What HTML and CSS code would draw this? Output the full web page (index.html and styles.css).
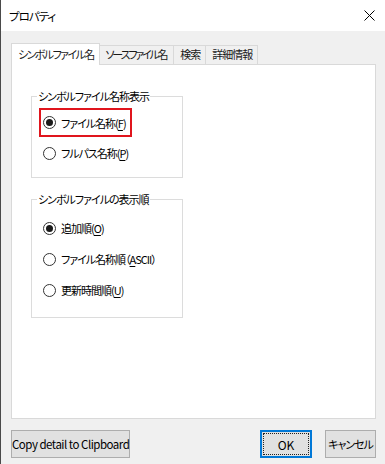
FILE: index.html
```html
<!DOCTYPE html>
<html lang="ja">
<head>
<meta charset="utf-8">
<title>プロパティ</title>
<link rel="stylesheet" href="styles.css">
</head>
<body>
<div class="window">
  <div class="titlebar">
    <span class="title">プロパティ</span>
    <svg class="close" width="11" height="11" viewBox="0 0 11 11"><path d="M0.5 0.5 L10.5 10.5 M10.5 0.5 L0.5 10.5" stroke="#000" stroke-width="1" fill="none"/></svg>
  </div>
  <div class="main">
    <div class="tabs">
      <div class="tab active">シンボルファイル名</div>
      <div class="tab kana">ソースファイル名</div>
      <div class="tab">検索</div>
      <div class="tab">詳細情報</div>
    </div>
    <div class="panel">
      <fieldset class="group g1">
        <legend>シンボルファイル名称表示</legend>
        <div class="row highlight"><span class="radio checked"></span><span class="label">ファイル名称(<u>F</u>)</span></div>
        <div class="row second"><span class="radio"></span><span class="label">フルパス名称(<u>P</u>)</span></div>
      </fieldset>
      <fieldset class="group g2">
        <legend>シンボルファイルの表示順</legend>
        <div class="row"><span class="radio checked"></span><span class="label">追加順(<u>O</u>)</span></div>
        <div class="row"><span class="radio"></span><span class="label">ファイル名称順（<u>A</u>SCII）</span></div>
        <div class="row"><span class="radio"></span><span class="label">更新時間順(<u>U</u>)</span></div>
      </fieldset>
    </div>
    <div class="buttons">
      <button class="btn copy">Copy detail to Clipboard</button>
      <button class="btn ok">OK</button>
      <button class="btn cancel">キャンセル</button>
    </div>
  </div>
</div>
</body>
</html>
```

FILE: styles.css
```css
html, body {
  margin: 0;
  padding: 0;
}
body {
  width: 385px;
  height: 464px;
  overflow: hidden;
  background: #f0f0f0;
  font-family: "Noto Sans CJK JP", sans-serif;
  font-size: 11px;
  letter-spacing: -1px;
  color: #000;
  font-feature-settings: "palt";
}
.window {
  height: 464px;
  box-sizing: border-box;
  border-left: 1px solid #4a4a4a;
  display: flex;
  flex-direction: column;
}
.titlebar {
  height: 31px;
  flex: none;
  background: #fff;
  display: flex;
  align-items: center;
  justify-content: space-between;
  padding: 0 10px 0 8px;
}
.title {
  font-size: 11.5px;
  line-height: 16px;
}
.close {
  display: block;
}
.main {
  flex: 1;
  display: flex;
  flex-direction: column;
  padding: 12px 9px 6px 10px;
  min-height: 0;
}
.tabs {
  display: flex;
  align-items: flex-end;
  height: 21px;
  flex: none;
  position: relative;
  z-index: 1;
}
.tab {
  box-sizing: border-box;
  height: 19px;
  line-height: 17px;
  padding: 0 5px 0 6px;
  border: 1px solid #d9d9d9;
  border-bottom: none;
  background: #f0f0f0;
  margin-left: -1px;
  white-space: nowrap;
  color: #1a1a1a;
}
.tab.kana {
  letter-spacing: -2.2px;
  padding: 0 7px 0 6px;
}
.tab.active {
  height: 22px;
  line-height: 20px;
  margin-left: 0;
  margin-bottom: -1px;
  background: #fff;
  padding: 0 5px 0 6px;
  letter-spacing: -1.6px;
}
.panel {
  flex: 1;
  background: #fff;
  border: 1px solid #d9d9d9;
  padding: 23px 19px 0 19px;
  min-height: 0;
}
.group {
  box-sizing: border-box;
  width: 152px;
  margin: 0;
  border: 1px solid #dcdcdc;
  padding: 0 0 0 7px;
  min-width: 0;
}
.group legend {
  padding: 0 1px;
  margin-left: -2px;
  line-height: 16px;
}
.g1 {
  height: 90px;
  padding-top: 4px;
}
.g2 {
  height: 127px;
  margin-top: 13px;
  padding-top: 11px;
  display: flex;
  flex-direction: column;
  gap: 11px;
}
.row {
  display: flex;
  align-items: center;
  height: 20px;
  padding-left: 4px;
}
.row.highlight {
  display: inline-flex;
  box-sizing: border-box;
  height: 29px;
  border: 2px solid #e0151d;
  padding: 0 4px 0 2px;
}
.row.second {
  margin-top: 6px;
}
.radio {
  box-sizing: border-box;
  width: 13px;
  height: 13px;
  border: 1px solid #333;
  border-radius: 50%;
  background: #fff;
  flex: none;
  display: flex;
  align-items: center;
  justify-content: center;
}
.radio.checked::after {
  content: "";
  width: 7px;
  height: 7px;
  border-radius: 50%;
  background: #1a1a1a;
}
.label {
  margin-left: 5px;
  white-space: nowrap;
  line-height: 16px;
}
.label u {
  text-decoration-thickness: 1px;
  text-underline-offset: 2px;
}
.buttons {
  display: flex;
  height: 28px;
  margin-top: 11px;
  flex: none;
}
.btn {
  box-sizing: border-box;
  height: 28px;
  margin: 0;
  padding: 0;
  background: #e1e1e1;
  border: 1px solid #adadad;
  font-family: "Noto Sans CJK JP", sans-serif;
  font-size: 11px;
  letter-spacing: -1px;
  color: #000;
  font-feature-settings: "palt";
  white-space: nowrap;
}
.copy {
  width: 119px;
  font-size: 11.5px;
  letter-spacing: -0.5px;
}
.ok {
  width: 52px;
  margin-left: auto;
  border: 2px solid #0078d7;
  outline: 1px dotted #222;
  outline-offset: -4px;
  font-size: 12px;
  letter-spacing: 0;
}
.cancel {
  width: 51px;
  margin-left: 13px;
}
```
